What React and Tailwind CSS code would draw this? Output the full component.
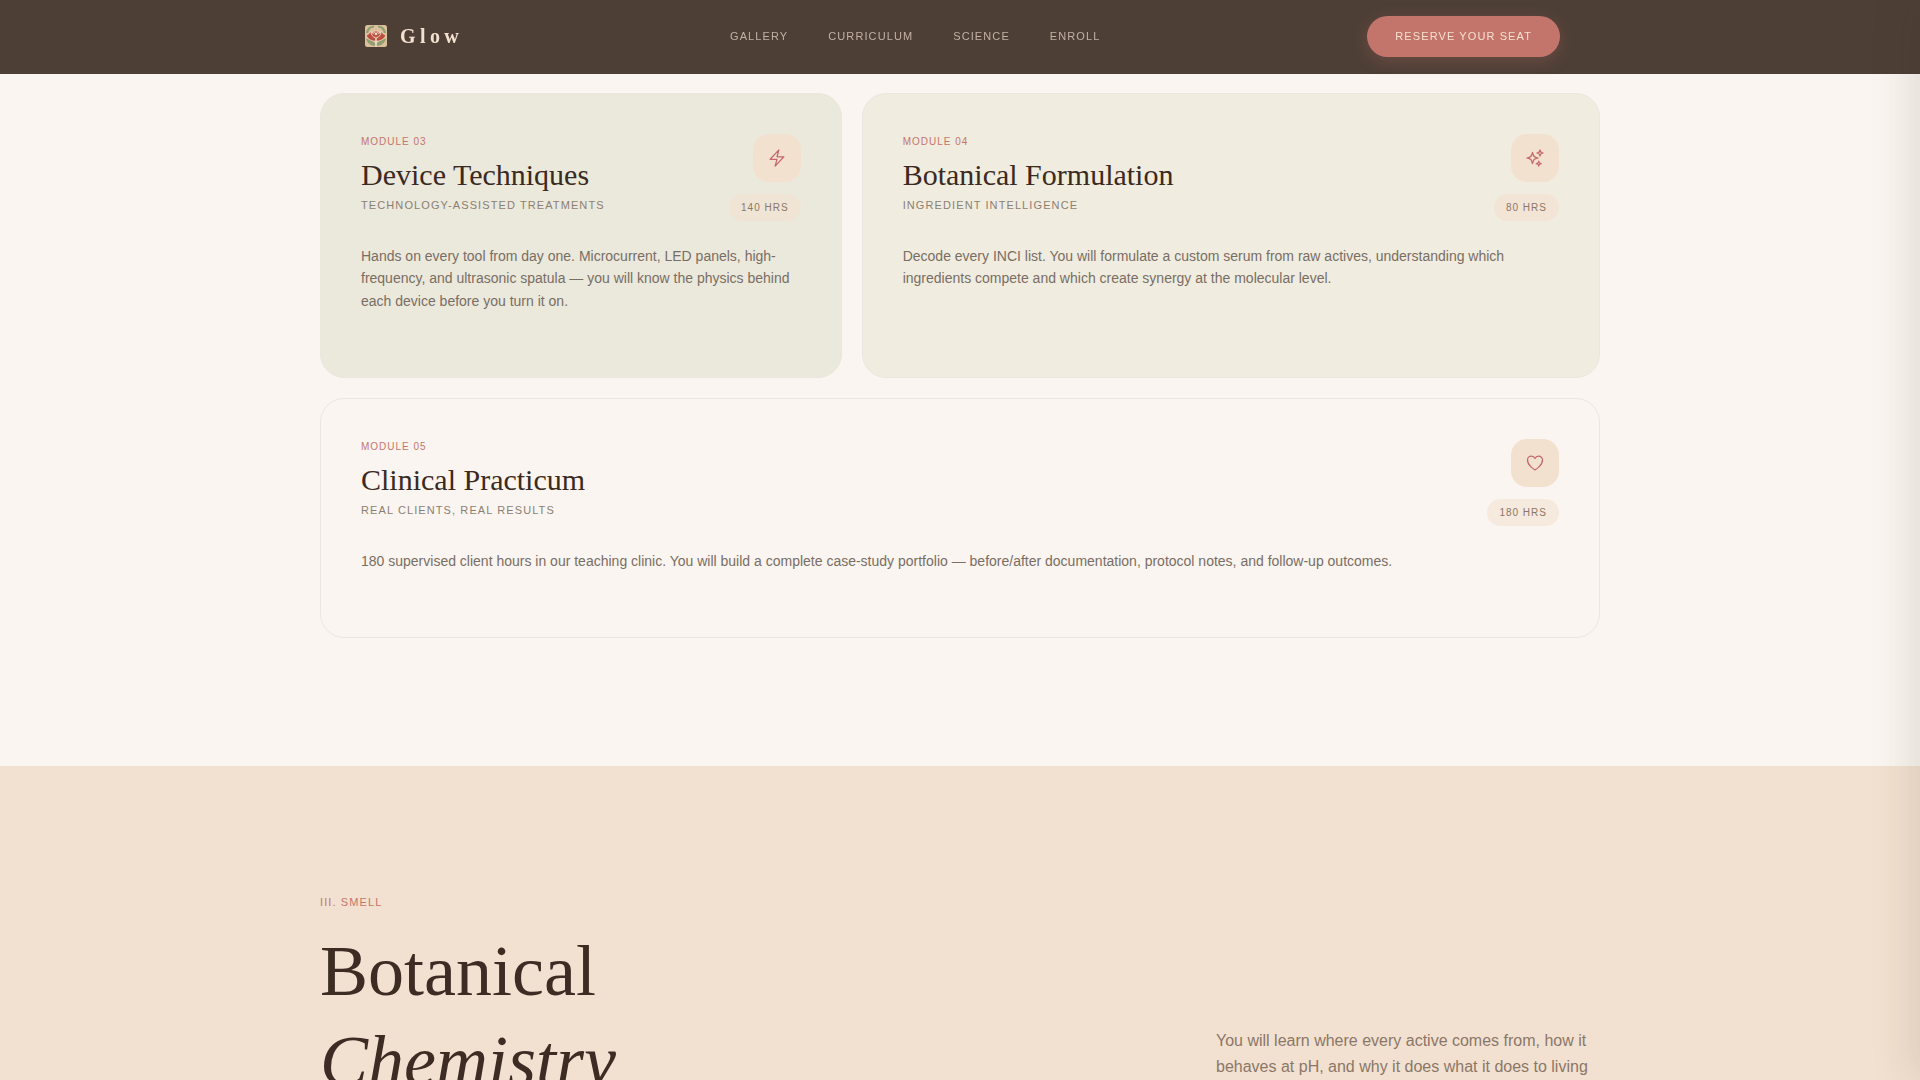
import {HiOutlineBolt, HiOutlineHeart, HiOutlineSparkles} from 'react-icons/hi2';

const navLinks = ['Gallery', 'Curriculum', 'Science', 'Enroll'];

const modules = [
    {
        number: '03',
        title: 'Device Techniques',
        subtitle: 'Technology-Assisted Treatments',
        hours: 140,
        icon: HiOutlineBolt,
        text: 'Hands on every tool from day one. Microcurrent, LED panels, high-frequency, and ultrasonic spatula — you will know the physics behind each device before you turn it on.',
        className: 'col-span-12 lg:col-span-5 bg-[#ebe8dc]'
    },
    {
        number: '04',
        title: 'Botanical Formulation',
        subtitle: 'Ingredient Intelligence',
        hours: 80,
        icon: HiOutlineSparkles,
        text: 'Decode every INCI list. You will formulate a custom serum from raw actives, understanding which ingredients compete and which create synergy at the molecular level.',
        className: 'col-span-12 lg:col-span-7 bg-[#f0ecdf]'
    },
    {
        number: '05',
        title: 'Clinical Practicum',
        subtitle: 'Real Clients, Real Results',
        hours: 180,
        icon: HiOutlineHeart,
        text: '180 supervised client hours in our teaching clinic. You will build a complete case-study portfolio — before/after documentation, protocol notes, and follow-up outcomes.',
        className: 'col-span-12 bg-[#faf5f0]'
    }
];

const Logo = () => (
    <svg viewBox="0 0 22 22" className="h-[22px] w-[22px]" aria-hidden="true">
        <rect width="22" height="22" rx="2.5" fill="#dcc09a"/>
        <path d="M2 8C3 4 6 1.500 9 1.500" fill="none" stroke="#8f9d73" strokeWidth="2.2"/>
        <path d="M20 8C19 4 16 1.500 13 1.500" fill="none" stroke="#8f9d73" strokeWidth="2.2"/>
        <path d="M10.500 21C6 21 2 18 1 13.500C5 15 9 16 10.500 19Z" fill="#8f9d73"/>
        <path d="M11.500 21C16 21 20 18 21 13.500C17 15 13 16 11.500 19Z" fill="#8f9d73"/>
        <path
            d="M11 16C6.500 16.500 2.500 14 1 10C3.500 9.500 4.500 8.500 5.500 6.500L8 7.500L11 3.500L14 7.500L16.500 6.500C17.500 8.500 18.500 9.500 21 10C19.500 14 15.500 16.500 11 16Z"
            fill="#b9503f" stroke="#f3e3cf" strokeWidth="0.7"/>
        <path d="M11 13C7.500 12 6 9.500 6.200 7L8.500 8.500L11 5L13.500 8.500L15.800 7C16 9.500 14.500 12 11 13Z"
              fill="#b9503f" stroke="#f3e3cf" strokeWidth="0.9"/>
        <path d="M11 10.500L9.500 9L11 7L12.500 9Z" fill="#f3e3cf"/>
        <path d="M11 13V22" stroke="#f3e3cf" strokeWidth="1.3"/>
    </svg>
);

const ModuleCard = ({number, title, subtitle, hours, icon: Icon, text, className}) => (
    <article className={`rounded-3xl border border-[#ebe7df] p-10 ${className}`}>
        <div className="mb-6 flex items-start justify-between">
            <div>
                <p className="mb-2 text-[10px] leading-normal tracking-widest text-[#c4756b] uppercase">
                    Module {number}
                </p>
                <h3 className="font-['Liberation_Serif',serif] text-3xl leading-9 text-[#3a2a22]">{title}</h3>
                <p className="mt-1 text-[11px] leading-normal tracking-widest text-[#8b7f72] uppercase">{subtitle}</p>
            </div>
            <div className="flex flex-col items-end gap-3">
                <div className="flex h-12 w-12 items-center justify-center rounded-2xl bg-[#f3e1d0]">
                    <Icon className="h-5 w-5 text-[#c4696a]"/>
                </div>
                <span
                    className="rounded-full bg-[#f3e1d0]/60 px-3 py-1.5 text-[10px] leading-normal tracking-widest text-[#8b7768] uppercase">
                    {hours} hrs
                </span>
            </div>
        </div>
        <p className="mb-6 text-sm leading-relaxed text-[#796e64]">{text}</p>
    </article>
);

export default function App() {
    return (
        <div className="h-screen overflow-hidden bg-[#faf5f0] font-['Liberation_Sans',sans-serif]">
            <header className="sticky top-0 z-10 border-b border-[#4e3f36] bg-[#4e3f36]">
                <div className="mx-auto flex max-w-7xl items-center justify-between px-10 py-4">
                    <a href="#top" className="flex items-center gap-2">
                        <span className="flex h-8 w-8 items-center justify-center">
                            <Logo/>
                        </span>
                        <span
                            className="font-['Liberation_Serif',serif] text-xl font-bold tracking-[0.22em] text-[#f3e1d0]">
                            Glow
                        </span>
                    </a>
                    <nav className="flex gap-10">
                        {navLinks.map((link) => (
                            <a key={link} href={`#${link.toLowerCase()}`}
                               className="text-[11px] leading-normal tracking-widest text-[#c2b1a3] uppercase">
                                {link}
                            </a>
                        ))}
                    </nav>
                    <button
                        className="rounded-full bg-[#c4756b] px-7 py-3 text-[11px] leading-normal tracking-widest text-[#f6e0cd] uppercase shadow-[0_4px_16px_rgba(196,117,107,0.25)]">
                        Reserve Your Seat
                    </button>
                </div>
            </header>

            <main>
                <section id="curriculum" className="px-6 pt-[19px] pb-32">
                    <div className="mx-auto grid max-w-7xl grid-cols-12 gap-5">
                        {modules.map((module) => (
                            <ModuleCard key={module.number} {...module}/>
                        ))}
                    </div>
                </section>

                <section id="science" className="bg-[#f2e1d0] px-6 pt-32 pb-32">
                    <div className="mx-auto flex max-w-7xl items-end justify-between">
                        <div>
                            <p className="mb-4 text-[11px] leading-normal tracking-widest text-[#c4756b] uppercase">
                                III. Smell
                            </p>
                            <h2 className="font-['Liberation_Serif',serif] text-7xl leading-[90px] text-[#3d2c24]">
                                Botanical<br/>
                                <em>Chemistry</em>
                            </h2>
                        </div>
                        <p className="max-w-sm pb-[26px] text-base leading-[26px] text-[#8b7768]">
                            You will learn where every active comes from, how it behaves at pH, and why it does what it
                            does to living
                        </p>
                    </div>
                </section>
            </main>

            {/* Closed side drawer, only its shadow reaches the page */}
            <div
                className="fixed inset-y-0 left-full z-20 w-96 bg-[#faf5f0] shadow-[-8px_0_40px_rgba(61,44,36,0.13)]"/>
        </div>
    );
}
